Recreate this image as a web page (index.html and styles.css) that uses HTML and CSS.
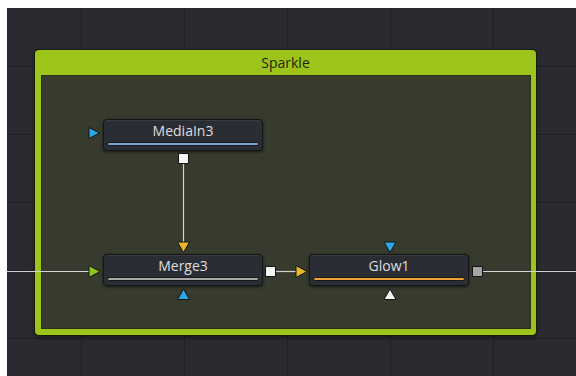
FILE: index.html
```html
<!DOCTYPE html>
<html lang="en">
<head>
    <meta charset="UTF-8">
    <meta name="viewport" content="width=device-width, initial-scale=1.0">
    <title>Sparkle - Node Graph</title>
    <link rel="stylesheet" href="styles.css">
</head>
<body>
    <div id="canvas">
        <div class="group">
            <div class="group-title">Sparkle</div>
            <div class="group-body"></div>
        </div>

        <div class="node node-media">
            <div class="node-label">MediaIn3</div>
            <div class="node-bar bar-blue"></div>
        </div>
        <div class="node node-merge">
            <div class="node-label">Merge3</div>
            <div class="node-bar bar-gray"></div>
        </div>
        <div class="node node-glow">
            <div class="node-label">Glow1</div>
            <div class="node-bar bar-orange"></div>
        </div>

        <!-- wires and ports, drawn in page coordinates -->
        <svg class="wires" viewBox="7 8 569 368" width="569" height="368">
            <g stroke="#d4d4d4" stroke-width="1.2" fill="none">
                <line x1="7" y1="271.5" x2="90" y2="271.5"/>
                <line x1="183.5" y1="163" x2="183.5" y2="243"/>
                <line x1="275" y1="271.5" x2="297" y2="271.5"/>
                <line x1="483" y1="271.5" x2="576" y2="271.5"/>
            </g>
            <g stroke="#121316" stroke-width="1" stroke-linejoin="round">
                <!-- MediaIn3 -->
                <polygon points="89,127.5 99.5,133 89,138.5" fill="#2ea6e6"/>
                <rect x="178.5" y="153.5" width="10" height="10" fill="#f4f4f4"/>
                <!-- Merge3 -->
                <polygon points="177.5,242 189.5,242 183.5,252.5" fill="#e9b824"/>
                <polygon points="89,265.5 100,271.5 89,277.5" fill="#8ec21c"/>
                <polygon points="183.5,289 189.5,299.5 177.5,299.5" fill="#2ea6e6"/>
                <rect x="265.5" y="266.5" width="10" height="10" fill="#f4f4f4"/>
                <!-- Glow1 -->
                <polygon points="296,265.5 307,271.5 296,277.5" fill="#e9b824"/>
                <polygon points="384,242 396,242 390,252.5" fill="#2ea6e6"/>
                <polygon points="390,289 396,299.5 384,299.5" fill="#f4f4f4"/>
                <rect x="472.5" y="266.5" width="10" height="10" fill="#a6a6a6"/>
            </g>
        </svg>
    </div>
</body>
</html>
```

FILE: styles.css
```css
body {
    margin: 0;
    background: #fff;
    font-family: 'Open Sans', 'Noto Sans', sans-serif;
}

#canvas {
    position: relative;
    width: 569px;
    height: 368px;
    margin: 8px 0 0 7px;
    overflow: hidden;
    background-color: #2a2b30;
    background-image:
        linear-gradient(to right, #1f2024 1px, transparent 1px),
        linear-gradient(to bottom, #1f2024 1px, transparent 1px);
    background-size: 103px 68px;
    background-position: 74px 58px;
}

.group {
    position: absolute;
    left: 28px;
    top: 42px;
    width: 501px;
    height: 285px;
    display: flex;
    flex-direction: column;
    background: #9cc41a;
    border-radius: 4px;
    box-shadow: 0 0 0 1px #161b06, 0 2px 4px rgba(0, 0, 0, 0.5);
}

.group-title {
    height: 26px;
    line-height: 26px;
    text-align: center;
    font-size: 14px;
    color: #1c2606;
}

.group-body {
    flex: 1;
    margin: 0 6px 7px 7px;
    background: #373b2d;
    box-shadow: 0 0 0 1px #2b3019;
}

.node {
    position: absolute;
    width: 158px;
    height: 30px;
    display: flex;
    flex-direction: column;
    padding: 0;
    background: #2b2d34;
    border: 1px solid #141519;
    border-radius: 4px;
    box-shadow: 0 1px 3px rgba(0, 0, 0, 0.6), inset 0 1px 0 #3a3c44;
}

.node-media { left: 96px; top: 111px; }
.node-merge { left: 96px; top: 246px; }
.node-glow  { left: 302px; top: 246px; }

.node-label {
    margin-top: 2px;
    height: 18px;
    line-height: 18px;
    text-align: center;
    font-size: 14px;
    color: #dedede;
}

.node-bar {
    height: 2px;
    margin: 2px 3px 0;
    border: 1px solid #17181c;
    border-radius: 2px;
}

.bar-blue { background: #79a6d4; }
.bar-gray { background: #a9a9a9; }
.bar-orange { background: #f0a035; }

.wires {
    position: absolute;
    left: 0;
    top: 0;
}
```
